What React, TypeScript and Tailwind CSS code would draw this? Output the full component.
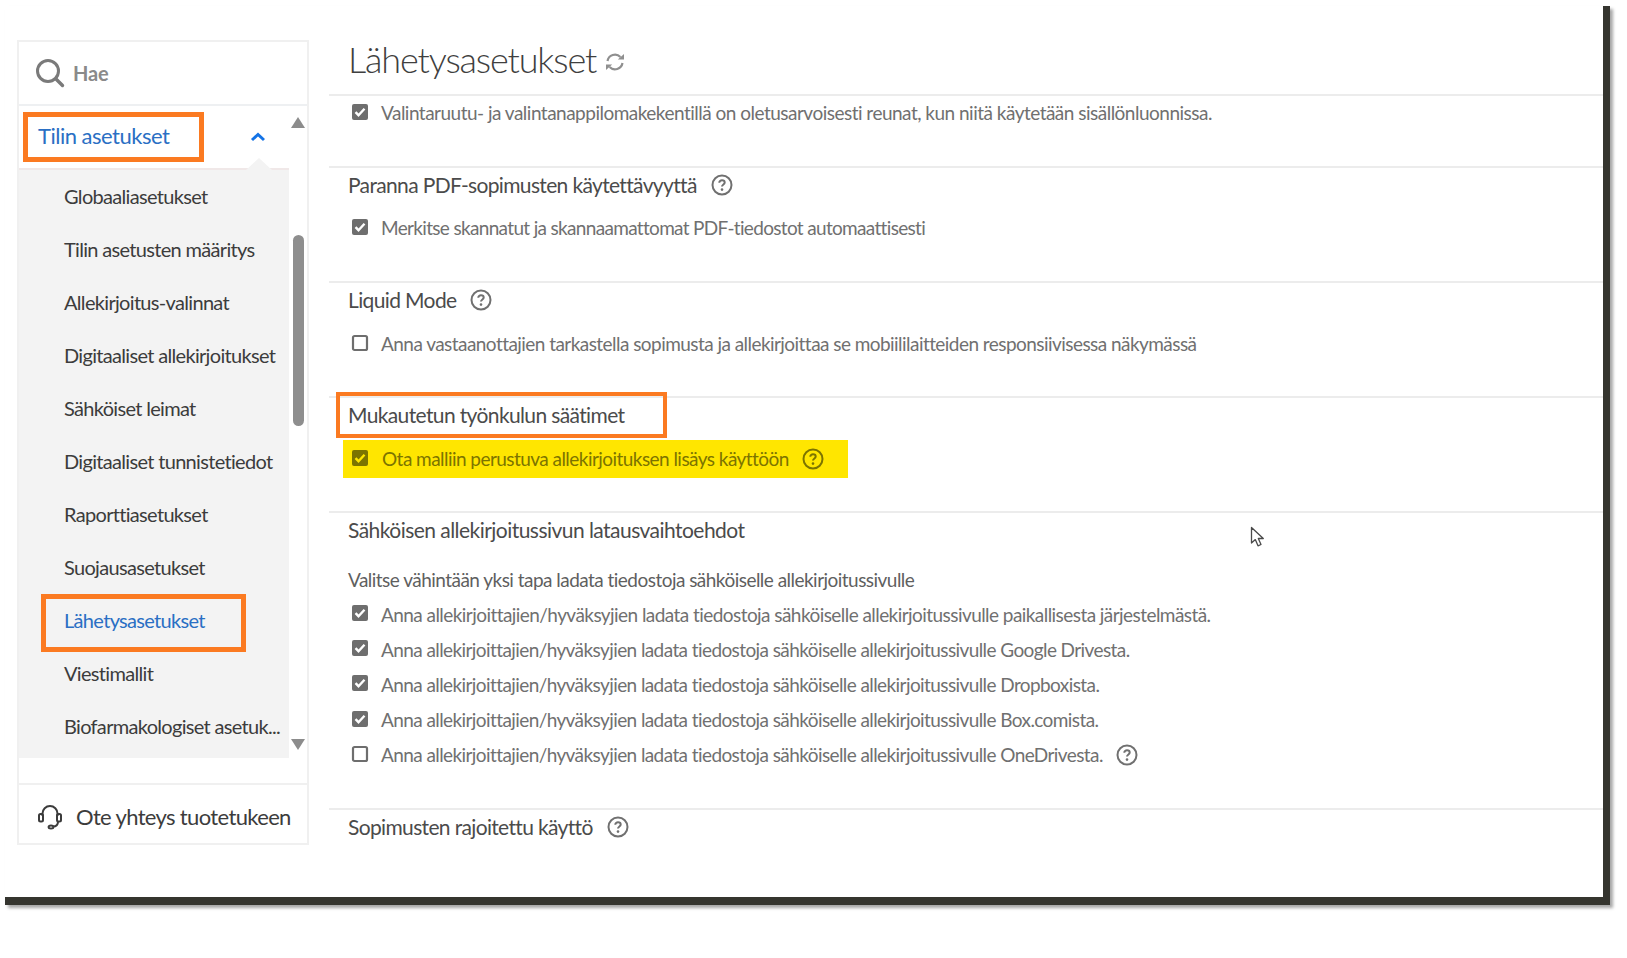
import React from "react";

const navItems = [
  "Globaaliasetukset",
  "Tilin asetusten määritys",
  "Allekirjoitus-valinnat",
  "Digitaaliset allekirjoitukset",
  "Sähköiset leimat",
  "Digitaaliset tunnistetiedot",
  "Raporttiasetukset",
  "Suojausasetukset",
  "Lähetysasetukset",
  "Viestimallit",
  "Biofarmakologiset asetuk...",
];

const uploadRows = [
  { label: "Anna allekirjoittajien/hyväksyjien ladata tiedostoja sähköiselle allekirjoitussivulle paikallisesta järjestelmästä.", on: true, tracking: "tracking-[-0.56px]" },
  { label: "Anna allekirjoittajien/hyväksyjien ladata tiedostoja sähköiselle allekirjoitussivulle Google Drivesta.", on: true, tracking: "tracking-[-0.59px]" },
  { label: "Anna allekirjoittajien/hyväksyjien ladata tiedostoja sähköiselle allekirjoitussivulle Dropboxista.", on: true, tracking: "tracking-[-0.59px]" },
  { label: "Anna allekirjoittajien/hyväksyjien ladata tiedostoja sähköiselle allekirjoitussivulle Box.comista.", on: true, tracking: "tracking-[-0.59px]" },
  { label: "Anna allekirjoittajien/hyväksyjien ladata tiedostoja sähköiselle allekirjoitussivulle OneDrivesta.", on: false, tracking: "tracking-[-0.59px]", help: true },
];

function Checkbox({ on, dark }: { on: boolean; dark?: boolean }) {
  return (
    <svg width="18" height="18" viewBox="0 0 18 18" className="mb-[3px] shrink-0">
      {on ? (
        <>
          <rect x="1" y="1" width="16" height="16" rx="2" fill={dark ? "#7c7400" : "#6e6e6e"} />
          <path d="M4.5 9.2l3 3 6-6.4" fill="none" stroke={dark ? "#ffe600" : "#fff"} strokeWidth="2.4" />
        </>
      ) : (
        <rect x="2" y="2" width="14" height="14" rx="1.5" fill="none" stroke="#6e6e6e" strokeWidth="2.2" />
      )}
    </svg>
  );
}

function Help({ dark }: { dark?: boolean }) {
  const c = dark ? "#7c7400" : "#707070";
  return (
    <svg width="22" height="22" viewBox="0 0 22 22" className="shrink-0">
      <circle cx="11" cy="11" r="9.5" fill="none" stroke={c} strokeWidth="2" />
      <path d="M8.3 8.7c0-1.6 1.2-2.4 2.7-2.4s2.7.9 2.7 2.2c0 2-2.7 1.9-2.7 4.1" fill="none" stroke={c} strokeWidth="2" />
      <circle cx="11" cy="15.6" r="1.3" fill={c} />
    </svg>
  );
}

function Row({ label, on, tracking = "tracking-[-0.55px]" }: { label: string; on: boolean; tracking?: string }) {
  return (
    <div className={`flex items-center gap-[12px] whitespace-nowrap pl-[22px] text-[19px] text-[#707070] ${tracking}`}>
      <Checkbox on={on} />
      <span>{label}</span>
    </div>
  );
}

function Section({
  title,
  help,
  height,
  tracking = "tracking-[-0.65px]",
  children,
}: {
  title: string;
  help?: boolean;
  height: string;
  tracking?: string;
  children?: React.ReactNode;
}) {
  return (
    <section className={`${height} border-t-2 border-[#ececec]`}>
      <div className={`flex h-[36px] items-center gap-[14px] whitespace-nowrap pb-[2px] pl-[19px] text-[21px] text-[#4b4b4b] ${tracking}`}>
        <span>{title}</span>
        {help ? <Help /> : null}
      </div>
      {children}
    </section>
  );
}

export default function App() {
  return (
    <div className="h-[958px] w-[1627px] overflow-hidden bg-white font-['Lato','Liberation_Sans',sans-serif]">
      <div className="relative ml-[5px] mt-[6px] flex h-[899px] w-[1605px] border-r-[7px] border-b-[8px] border-[#35352f] bg-white pl-[12px] pt-[34px] shadow-[3px_3px_3px_rgba(0,0,0,0.35)]">
        {/* sidebar */}
        <aside className="flex h-[805px] w-[292px] shrink-0 flex-col border-2 border-[#f0f0f0]">
          <div className="flex h-[64px] shrink-0 items-center gap-[8px] border-b-2 border-[#eef0f2] pl-[16px]">
            <svg width="30" height="30" viewBox="0 0 30 30">
              <circle cx="13" cy="13" r="10.5" fill="none" stroke="#7a7a7a" strokeWidth="3" />
              <path d="M21 21l6.5 6.5" stroke="#7a7a7a" strokeWidth="3.4" strokeLinecap="round" />
            </svg>
            <span className="text-[20px] font-bold tracking-[-0.2px] text-[#8a8a8a]">Hae</span>
          </div>
          <div className="flex min-h-0 flex-1">
            <div className="w-[270px] shrink-0">
              <div className="relative flex h-[64px] items-center justify-between border-b-2 border-[#f0e8e8] pb-[1px] pl-[4px] pr-[23px]">
                <div className="flex h-[50px] w-[181px] items-center whitespace-nowrap border-[5px] border-[#fb7a21] pb-[3px] pl-[10px] text-[22px] tracking-[-0.5px] text-[#2a6fc4]">
                  Tilin asetukset
                </div>
                <svg width="16" height="10" viewBox="0 0 16 10">
                  <path d="M2 8l6-5.5L14 8" fill="none" stroke="#1473e6" strokeWidth="3" />
                </svg>
                <svg width="26" height="12" viewBox="0 0 26 12" className="absolute bottom-[-2px] right-[17px]">
                  <path d="M0 12L13 0l13 12z" fill="#f3f3f3" />
                </svg>
              </div>
              <ul className="h-[588px] bg-[#f3f3f3] pt-[1px] text-[20px] tracking-[-0.68px] text-[#3c3c3c]">
                {navItems.map((item) => (
                  <li key={item} className="flex h-[53.1px] items-center whitespace-nowrap pb-[4px] pl-[22px]">
                    {item === "Lähetysasetukset" ? (
                      <div className="mt-[6px] flex h-[58px] w-[205px] shrink-0 items-center border-[5px] border-[#fb7a21] pb-[6px] pl-[18px] text-[#2a6fc4]">
                        {item}
                      </div>
                    ) : (
                      <span className="pl-[23px]">{item}</span>
                    )}
                  </li>
                ))}
              </ul>
            </div>
            <div className="flex w-[18px] flex-col items-center pt-[11px]">
              <svg width="14" height="11" viewBox="0 0 14 11"><path d="M7 0l7 11H0z" fill="#8c8c8c" /></svg>
              <div className="mt-[107px] h-[191px] w-[11px] shrink-0 rounded-full bg-[#8e8e8e]" />
              <svg width="14" height="11" viewBox="0 0 14 11" className="mt-[313px]"><path d="M0 0h14L7 11z" fill="#8c8c8c" /></svg>
            </div>
          </div>
          <div className="flex h-[60px] shrink-0 items-center gap-[13px] whitespace-nowrap border-t-2 border-[#f0f0f0] pl-[18px] pt-[5px] text-[22px] tracking-[-0.65px] text-[#3c3c3c]">
            <svg width="26" height="26" viewBox="0 0 26 26" fill="none" stroke="#3c3c3c" strokeWidth="2">
              <path d="M5.5 12V9.5a7.5 7.5 0 0 1 15 0V12" />
              <rect x="2" y="10" width="4" height="7.5" rx="1.5" />
              <rect x="20" y="10" width="4" height="7.5" rx="1.5" />
              <path d="M21 17.5c0 3.5-2.5 5-5 5" />
              <ellipse cx="14" cy="23" rx="2.4" ry="1.5" />
            </svg>
            <span>Ote yhteys tuotetukeen</span>
          </div>
        </aside>

        {/* main */}
        <main className="ml-[20px] min-w-0 flex-1">
          <div className="flex h-[54px] items-center gap-[9px] whitespace-nowrap pb-[16px] pl-[19px] text-[36px] font-light tracking-[-1.15px] text-[#3f3f3f]">
            <span>Lähetysasetukset</span>
            <svg width="20" height="20" viewBox="0 0 20 20" fill="none" stroke="#8f8f8f" strokeWidth="2.2" className="mt-[6px]">
              <path d="M2.5 9A7.6 7.6 0 0 1 15.4 5" />
              <path d="M17.5 11A7.6 7.6 0 0 1 4.6 15" />
              <path d="M12.8 7.6H19V2z" strokeWidth="0" fill="#8f8f8f" />
              <path d="M7.2 12.4H1V18z" strokeWidth="0" fill="#8f8f8f" />
            </svg>
          </div>
          <section className="h-[72px] border-t-2 border-[#ececec] pt-[3px]">
            <Row on tracking="tracking-[-0.51px]" label="Valintaruutu- ja valintanappilomakekentillä on oletusarvoisesti reunat, kun niitä käytetään sisällönluonnissa." />
          </section>
          <Section title="Paranna PDF-sopimusten käytettävyyttä" help height="h-[115px]">
            <div className="mt-[10px]"><Row on tracking="tracking-[-0.67px]" label="Merkitse skannatut ja skannaamattomat PDF-tiedostot automaattisesti" /></div>
          </Section>
          <Section title="Liquid Mode" help height="h-[115px]" tracking="tracking-[-0.63px]">
            <div className="mt-[11px]"><Row on={false} label="Anna vastaanottajien tarkastella sopimusta ja allekirjoittaa se mobiililaitteiden responsiivisessa näkymässä" /></div>
          </Section>
          <section className="h-[115px] border-t-2 border-[#ececec]">
            <div className="ml-[7px] mt-[-6px] flex h-[46px] w-[331px] items-center whitespace-nowrap border-[4px] border-[#fb7a21] pl-[8px] text-[21px] tracking-[-0.63px] text-[#4b4b4b]">
              Mukautetun työnkulun säätimet
            </div>
            <div className="ml-[14px] mt-[2px] flex h-[38px] w-[505px] items-center gap-[13px] whitespace-nowrap bg-[#ffe600] pl-[8px] text-[19px] tracking-[-0.55px] text-[#7c7400]">
              <Checkbox on dark />
              <span>Ota malliin perustuva allekirjoituksen lisäys käyttöön</span>
              <Help dark />
            </div>
          </section>
          <Section title="Sähköisen allekirjoitussivun latausvaihtoehdot" height="h-[297px]" tracking="tracking-[-0.54px]">
            <div className="mt-[17px] whitespace-nowrap pl-[19px] text-[19px] tracking-[-0.53px] text-[#5f5f5f]">Valitse vähintään yksi tapa ladata tiedostoja sähköiselle allekirjoitussivulle</div>
            <div className="mt-[6px] flex flex-col gap-[6.6px]">
              {uploadRows.map((row) => (
                <div key={row.label} className="flex items-center gap-[13px]">
                  <Row on={row.on} label={row.label} tracking={row.tracking} />
                  {row.help ? <Help /> : null}
                </div>
              ))}
            </div>
          </Section>
          <Section title="Sopimusten rajoitettu käyttö" help height="h-[60px]" />
        </main>

        {/* mouse pointer caught in the screenshot */}
        <svg width="16" height="22" viewBox="0 0 16 22" className="absolute left-[1245px] top-[520px]">
          <path d="M1.5 1.5v15.5l3.8-3.4 2.7 6.2 3-1.3-2.7-6h5z" fill="#fff" stroke="#4a4a4a" strokeWidth="1.3" strokeLinejoin="round" />
        </svg>
      </div>
    </div>
  );
}
